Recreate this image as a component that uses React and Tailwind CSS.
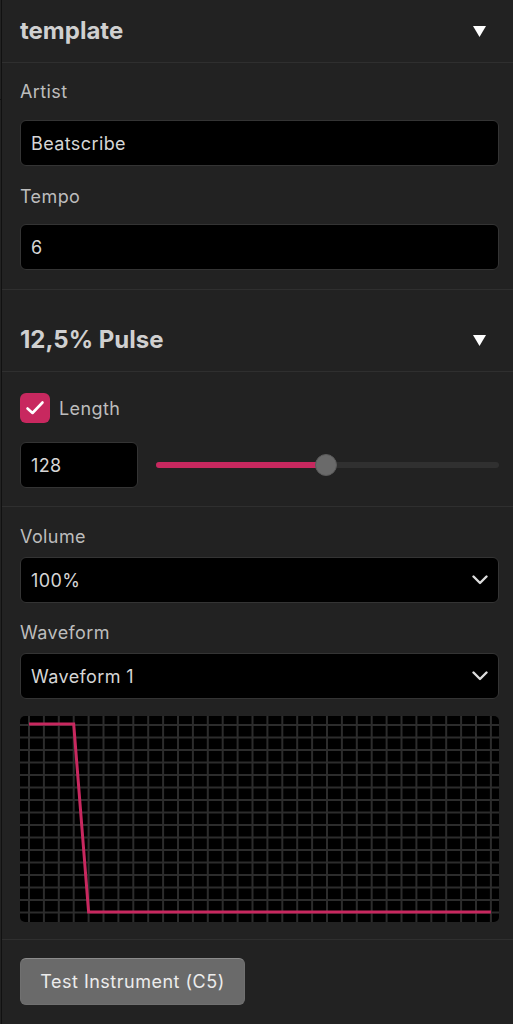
import React from "react";

const PINK = "#c8285f";

function Triangle() {
  return (
    <svg width="13" height="11" viewBox="0 0 13 11">
      <polygon points="0,0 13,0 6.5,11" fill="#ffffff" />
    </svg>
  );
}

function Chevron() {
  return (
    <svg width="16" height="10" viewBox="0 0 16 10">
      <path d="M1.5 1.5 L8 8 L14.5 1.5" fill="none" stroke="#dcdcdc" strokeWidth="2.4" strokeLinecap="round" strokeLinejoin="round" />
    </svg>
  );
}

function Label({ children, className = "" }) {
  return <div className={"text-[18px] leading-[20px] tracking-[0.4px] text-[#bdbdbd] " + className}>{children}</div>;
}

function Field({ value, className = "" }) {
  return (
    <div className={"h-[46px] rounded-[6px] bg-black border border-[#343434] flex items-center pl-[10px] text-[18px] tracking-[0.4px] text-[#d6d6d6] " + className}>
      {value}
    </div>
  );
}

function Select({ value, className = "" }) {
  return (
    <div className={"h-[46px] rounded-[6px] bg-black border border-[#343434] flex items-center justify-between pl-[10px] pr-[10px] text-[18px] tracking-[0.4px] text-[#d6d6d6] " + className}>
      <span>{value}</span>
      <Chevron />
    </div>
  );
}

function WaveCanvas() {
  const W = 479;
  const H = 206;
  const xs = Array.from({ length: 32 }, (_, i) => 9 + i * 14.9);
  const ys = Array.from({ length: 16 }, (_, j) => 9 + j * 12.5);
  const pts = [
    [xs[0], 8],
    [xs[3], 8],
    [xs[4], 196],
    [xs[31], 196],
  ];
  return (
    <div className="mt-[17px] h-[206px] rounded-[5px] bg-black overflow-hidden">
      <svg width={W} height={H} viewBox={`0 0 ${W} ${H}`} className="block">
        {xs.map((x, i) => (
          <line key={"v" + i} x1={x} y1={0} x2={x} y2={H} stroke="#2c2c2c" strokeWidth="2" />
        ))}
        {ys.map((y, j) => (
          <line key={"h" + j} x1={0} y1={y} x2={W} y2={y} stroke="#2c2c2c" strokeWidth="2" />
        ))}
        <polyline
          points={pts.map((p) => p.join(",")).join(" ")}
          fill="none"
          stroke={PINK}
          strokeWidth="3"
          strokeLinejoin="miter"
        />
      </svg>
    </div>
  );
}

export default function App() {
  return (
    <div
      className="flex w-[513px] h-[1024px] bg-[#222222] overflow-hidden"
      style={{ fontFamily: "Inter, 'Noto Sans', sans-serif" }}
    >
      <div className="w-[2px] flex flex-col">
        <div className="h-[100px] border-b border-[#111]" />
      </div>
      <div className="w-px bg-[#111]" />
      <div className="flex-1 flex flex-col">
        {/* header: template */}
        <div className="h-[63px] flex items-center justify-between pl-[18px] pr-[27px] border-b border-[#2f2f2f]">
          <span className="text-[24px] font-bold text-[#d0d0d0]">template</span>
          <Triangle />
        </div>

        {/* song fields */}
        <div className="pt-[19px] pb-[19px] pl-[18px] pr-[14px] border-b border-[#2f2f2f]">
          <Label>Artist</Label>
          <Field value="Beatscribe" className="mt-[18px]" />
          <Label className="mt-[21px]">Tempo</Label>
          <Field value="6" className="mt-[17px]" />
        </div>

        {/* instrument header */}
        <div className="mt-[19px] h-[63px] flex items-center justify-between pl-[18px] pr-[27px] border-b border-[#2f2f2f]">
          <span className="text-[24px] font-bold text-[#d0d0d0]">12,5% Pulse</span>
          <Triangle />
        </div>

        {/* length */}
        <div className="pt-[21px] pb-[18px] pl-[18px] pr-[14px] border-b border-[#2f2f2f]">
          <div className="flex items-center h-[30px]">
            <div className="w-[30px] h-[30px] rounded-[6px] flex items-center justify-center" style={{ background: PINK }}>
              <svg width="20" height="16" viewBox="0 0 20 16">
                <path d="M2.5 8.5 L7.5 13 L17.5 2.5" fill="none" stroke="#fff" strokeWidth="2.6" strokeLinecap="round" strokeLinejoin="round" />
              </svg>
            </div>
            <span className="ml-[9px] text-[18px] tracking-[0.4px] text-[#bdbdbd]">Length</span>
          </div>
          <div className="mt-[19px] flex items-center">
            <Field value="128" className="w-[118px]" />
            <div className="ml-[18px] flex-1 relative h-[22px] flex items-center">
              <div className="w-full h-[6px] rounded-full bg-[#303030]">
                <div className="h-full rounded-full w-[170px]" style={{ background: PINK }} />
              </div>
              <div className="absolute left-[159px] top-0 w-[22px] h-[22px] rounded-full bg-[#6a6a6a] border border-[#5a5a5a]" />
            </div>
          </div>
        </div>

        {/* volume / waveform */}
        <div className="pt-[20px] pb-[17px] pl-[18px] pr-[14px] border-b border-[#2f2f2f]">
          <Label>Volume</Label>
          <Select value="100%" className="mt-[10px]" />
          <Label className="mt-[20px]">Waveform</Label>
          <Select value="Waveform 1" className="mt-[10px]" />
          <WaveCanvas />
        </div>

        {/* button */}
        <div className="pt-[18px] pl-[18px]">
          <button className="w-[225px] h-[47px] rounded-[6px] bg-[#6a6a6a] border border-[#707070] border-t-[#8c8c8c] text-[18px] tracking-[0.5px] text-[#ececec]">
            Test Instrument (C5)
          </button>
        </div>
      </div>
    </div>
  );
}
